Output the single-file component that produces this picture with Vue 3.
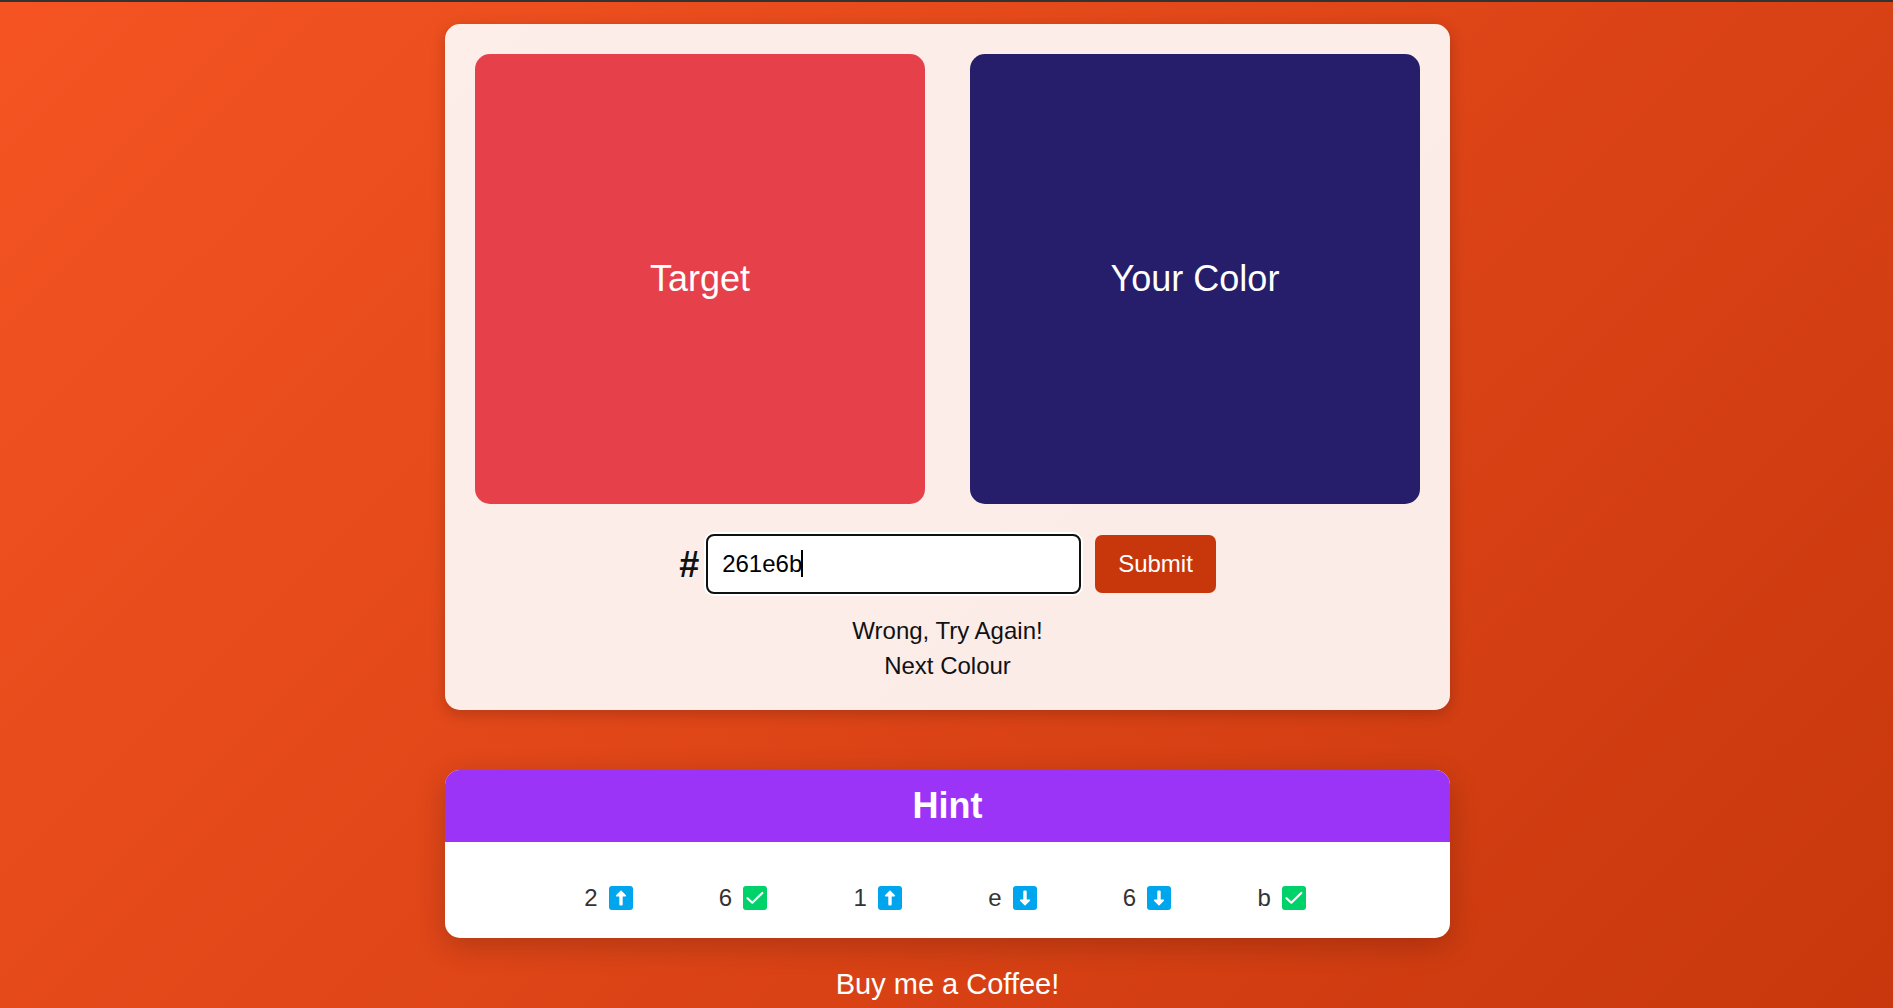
<template>
  <div class="page">
    <main class="content">
      <section class="card game">
        <div class="swatches">
          <div class="swatch target">Target</div>
          <div class="swatch guess">Your Color</div>
        </div>
        <form class="guess-form" @submit.prevent="submitGuess">
          <label class="hash" for="guess">#</label>
          <div class="field">
            <input id="guess" ref="guessInput" v-model="guess" type="text" maxlength="6" autocomplete="off" spellcheck="false" />
            <span class="caret"></span>
          </div>
          <button type="submit">Submit</button>
        </form>
        <p class="message">{{ message }}</p>
        <a class="next" href="#" @click.prevent="nextColour">Next Colour</a>
      </section>

      <section class="card hint">
        <h2 class="hint-title">Hint</h2>
        <ul class="hint-list">
          <li v-for="(hint, index) in hints" :key="index">
            <span>{{ hint.char }}</span>
            <svg class="icon" viewBox="0 0 24 24" aria-hidden="true">
              <rect width="24" height="24" rx="3" :fill="hint.state === 'ok' ? '#00d26a' : '#00a6ed'" />
              <path v-if="hint.state === 'ok'" d="M4.5 12.2 L9.3 16.7 L19.3 7" fill="none" stroke="#fff" stroke-width="2.2" stroke-linecap="round" stroke-linejoin="round" />
              <path v-else-if="hint.state === 'up'" :d="arrow" fill="#fff" />
              <path v-else :d="arrow" fill="#fff" transform="rotate(180 12 12)" />
            </svg>
          </li>
        </ul>
      </section>

      <a class="coffee" href="#">Buy me a Coffee!</a>
    </main>
  </div>
</template>

<script setup>
import { ref, onMounted } from "vue";

const target = "e6414b";
const guess = ref("261e6b");
const message = ref("Wrong, Try Again!");
const guessInput = ref();
const arrow = "M12 4.2 L17 9.2 Q17.6 10.2 16.4 10.4 H13.7 V18.6 Q13.7 19.6 12.7 19.6 H11.3 Q10.3 19.6 10.3 18.6 V10.4 H7.6 Q6.4 10.2 7 9.2 Z";
const hints = ref([
  { char: "2", state: "up" },
  { char: "6", state: "ok" },
  { char: "1", state: "up" },
  { char: "e", state: "down" },
  { char: "6", state: "down" },
  { char: "b", state: "ok" },
]);

onMounted(() => {
  guessInput.value.focus();
});

function submitGuess() {
  const value = guess.value.toLowerCase();
  hints.value = value.split("").map((char, i) => {
    const diff = parseInt(target[i], 16) - parseInt(char, 16);
    return { char, state: diff === 0 ? "ok" : diff > 0 ? "up" : "down" };
  });
  message.value = value === target ? "Correct!" : "Wrong, Try Again!";
}

function nextColour() {
  guess.value = "";
  message.value = "";
  hints.value = [];
}
</script>

<style>
body {
  margin: 0;
}
</style>

<style scoped>
.page {
  box-sizing: border-box;
  min-height: 100vh;
  padding: 22px 24px 0 26px;
  border-top: 2px solid #333;
  background: linear-gradient(135deg, #f55422, #c8370d) border-box;
  font-family: "Liberation Sans", Arial, sans-serif;
  font-size: 24px;
  line-height: 35px;
  color: #111;
}
.content {
  display: flex;
  flex-direction: column;
  align-items: center;
  max-width: 1005px;
  margin: 0 auto;
}
.card {
  box-sizing: border-box;
  width: 100%;
  border-radius: 15px;
}
.game {
  display: flex;
  flex-direction: column;
  align-items: center;
  padding: 30px 30px 27px;
  background: rgba(255, 255, 255, 0.9);
  box-shadow: 0 4px 15px rgba(0, 0, 0, 0.2);
}
.swatches {
  display: grid;
  grid-template-columns: 1fr 1fr;
  gap: 45px;
  width: 100%;
}
.swatch {
  box-sizing: border-box;
  display: flex;
  align-items: center;
  justify-content: center;
  aspect-ratio: 1;
  padding-bottom: 2px;
  border-radius: 15px;
  font-size: 36px;
  color: #fff;
}
.target {
  background: #e6414b;
}
.guess {
  background: #261e6b;
}
.guess-form {
  display: flex;
  align-items: center;
  margin: 31px 0 20px;
}
.hash {
  margin-right: 8px;
  font-size: 36px;
  font-weight: bold;
}
.field {
  position: relative;
  margin-right: 15px;
}
input {
  box-sizing: border-box;
  width: 373px;
  max-width: 100%;
  height: 58px;
  padding: 0 14px;
  border: 1px solid #aaa;
  border-radius: 7px;
  outline: 2px solid #101010;
  outline-offset: -1px;
  box-shadow: 0 0 0 3px #fff;
  background: #fff;
  font: inherit;
  color: #000;
  caret-color: transparent;
}
.caret {
  position: absolute;
  top: 15px;
  left: 94px;
  width: 2px;
  height: 27px;
  background: #000;
}
button {
  height: 58px;
  padding: 0 23px 2px;
  border: 0;
  border-radius: 7px;
  background: #c8360c;
  font: inherit;
  color: #fff;
  cursor: pointer;
}
.message {
  margin: 0;
}
.next {
  color: inherit;
  text-decoration: none;
}
.hint {
  margin-top: 60px;
  overflow: hidden;
  background: #fff;
  box-shadow: 0 8px 30px rgba(0, 0, 0, 0.2);
}
.hint-title {
  margin: 0;
  background: #9b34f6;
  font-size: 36px;
  line-height: 72px;
  text-align: center;
  color: #fff;
}
.hint-list {
  display: grid;
  grid-template-columns: repeat(6, 1fr);
  max-width: 808px;
  margin: 0 auto;
  padding: 38px 0 23px;
  list-style: none;
  color: #333;
}
.hint-list li {
  display: flex;
  align-items: center;
  justify-content: center;
  gap: 11px;
  padding-right: 5px;
}
.icon {
  width: 24px;
  height: 24px;
}
.coffee {
  margin-top: 29px;
  font-size: 29px;
  color: #fff;
  text-decoration: none;
}
</style>
